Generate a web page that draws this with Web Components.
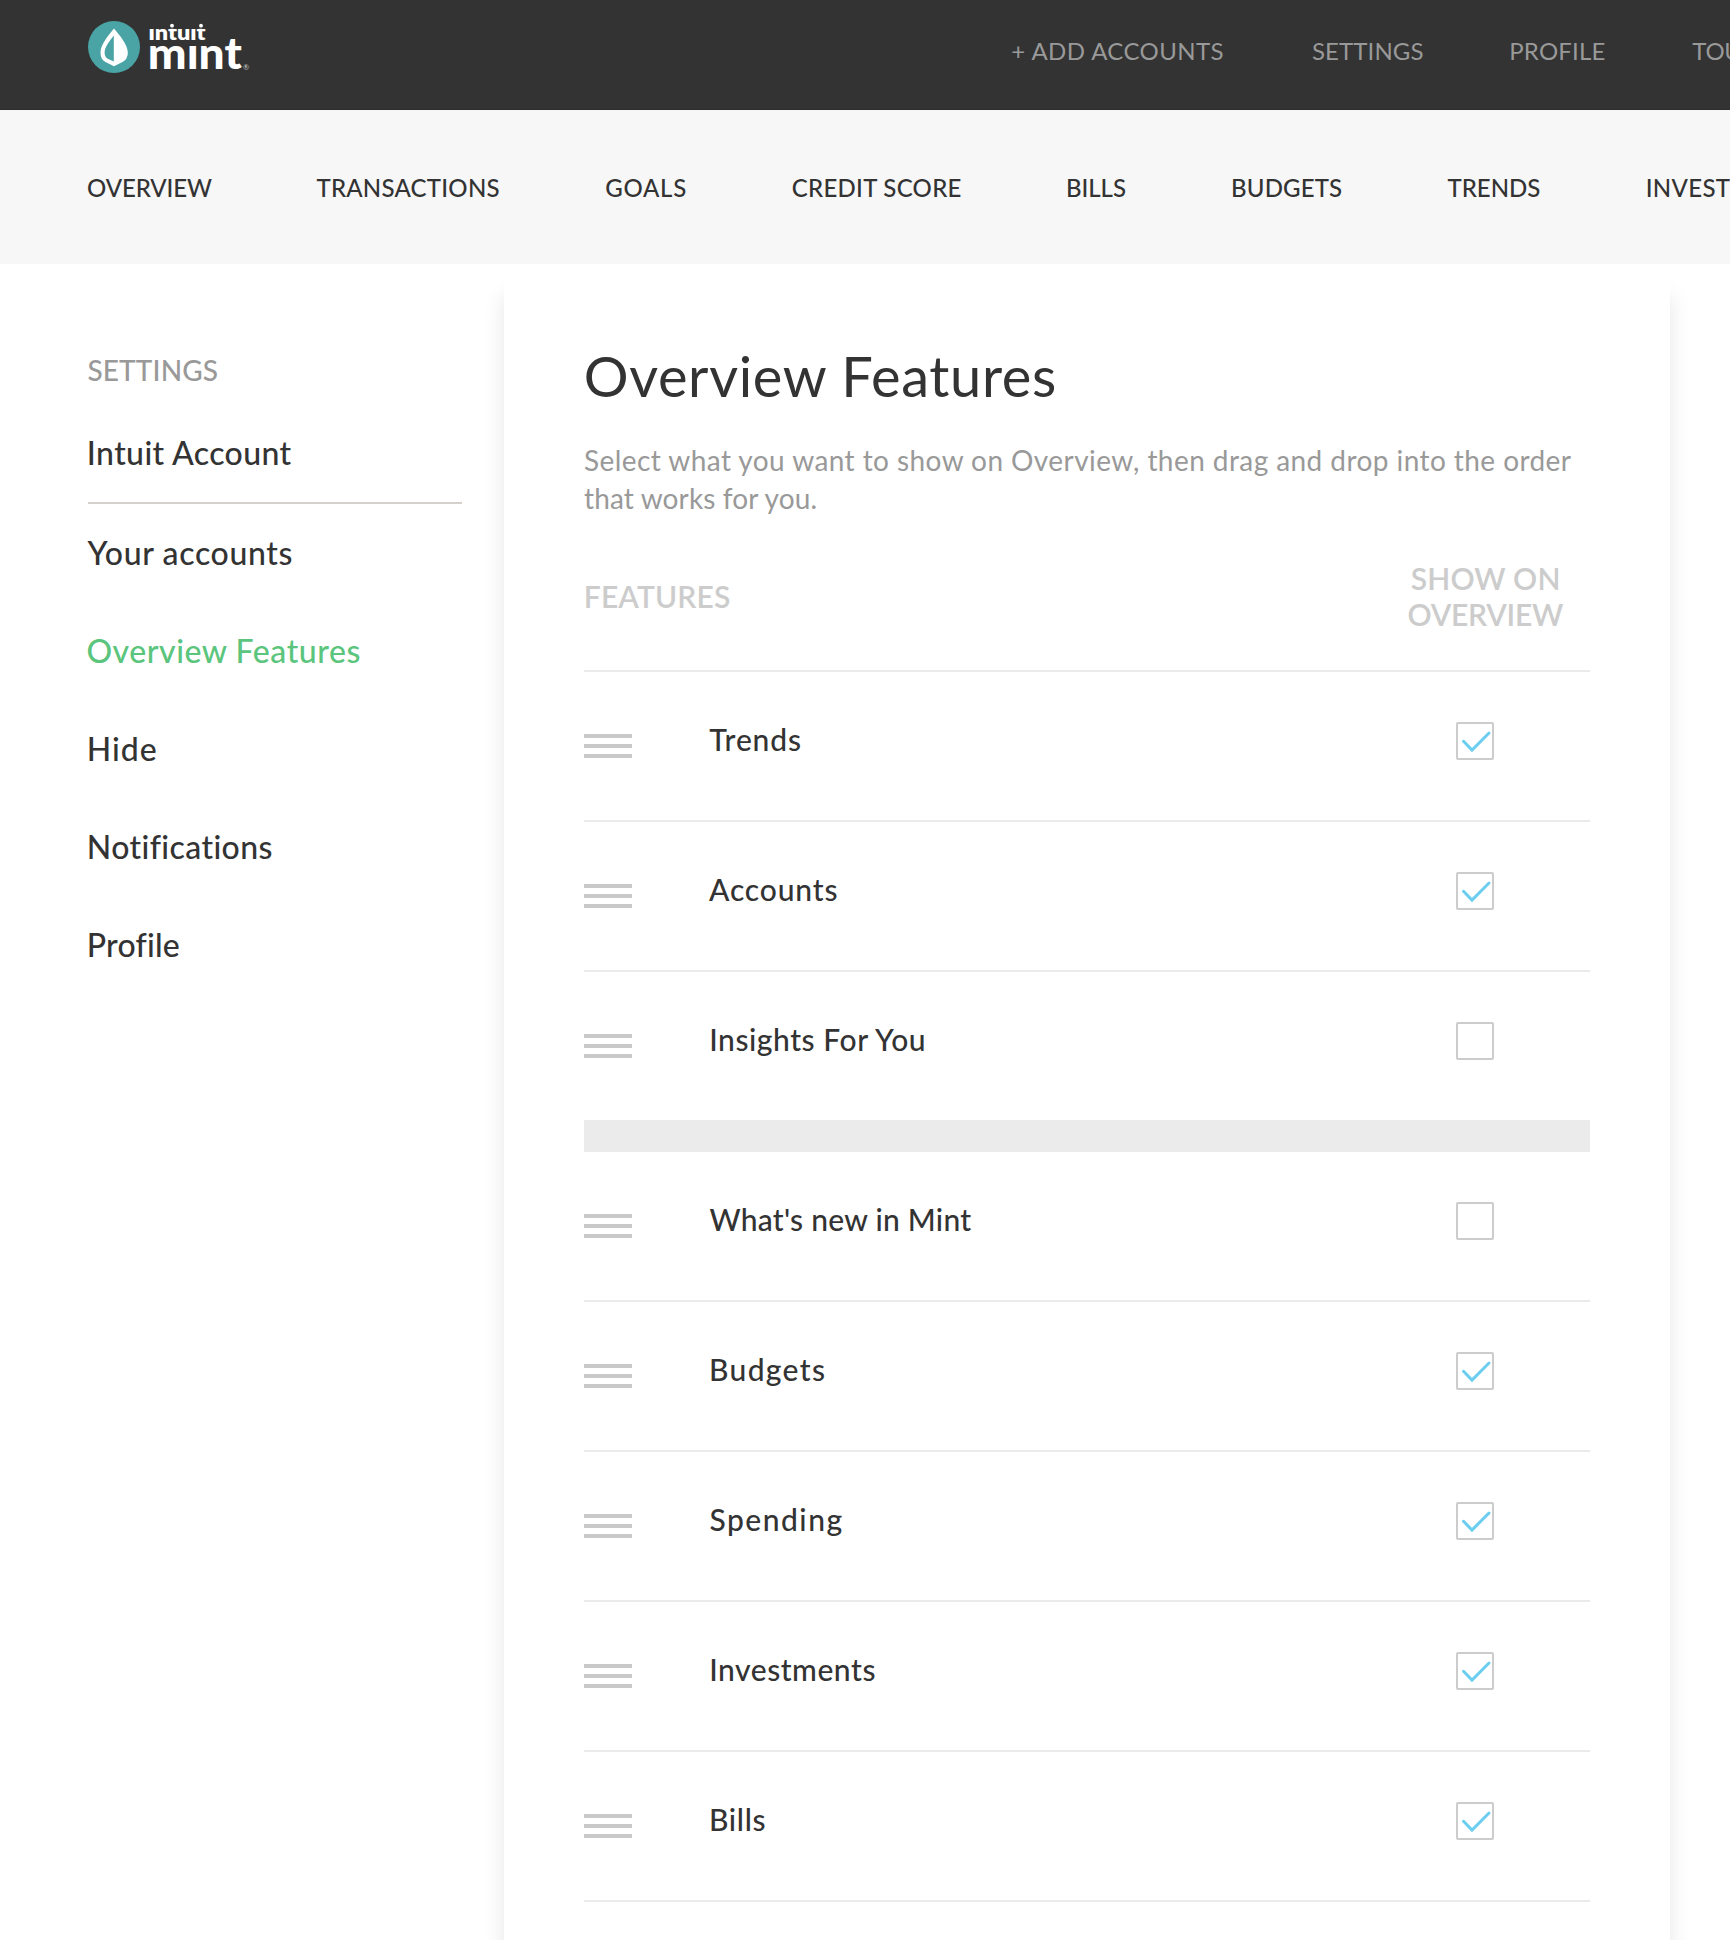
<!DOCTYPE html>
<html lang="en">
<head>
<meta charset="utf-8">
<title>Mint - Overview Features</title>
<style>
  html, body { margin: 0; padding: 0; background: #fff; }
  body { width: 1730px; height: 1940px; overflow: hidden; font-family: Lato, "Open Sans", "Liberation Sans", sans-serif; color: #333; }
</style>
</head>
<body>
<mint-app></mint-app>
<script>
const ctx = document.createElement('canvas').getContext('2d');

/* A line of text tracked so that its ink spans exactly `w` pixels. */
class FitText extends HTMLElement {
  connectedCallback() {
    const text = this.textContent;
    const w = parseFloat(this.getAttribute('w'));
    const size = this.getAttribute('size') || 24;
    const weight = this.getAttribute('weight') || 400;
    const lh = this.getAttribute('lh') || 36;
    ctx.font = `${weight} ${size}px Lato`;
    ctx.letterSpacing = '0.01px';
    const m = ctx.measureText(text);
    const left = -m.actualBoundingBoxLeft;
    const ink = m.actualBoundingBoxRight - left;
    const ls = (w - ink) / (text.length - 1);
    const root = this.attachShadow({ mode: 'open' });
    root.innerHTML = `<style>
      :host { display: block; flex: none; width: ${w}px; height: ${lh}px; line-height: ${lh}px; font-size: ${size}px; font-weight: ${weight}; white-space: nowrap; }
      span { display: block; margin-left: ${-left}px; letter-spacing: ${ls}px; }
    </style><span><slot></slot></span>`;
  }
}

class MintLogo extends HTMLElement {
  connectedCallback() {
    this.attachShadow({ mode: 'open' }).innerHTML = `<style>
      :host { display: block; width: 170px; height: 60px; flex: none; }
      svg { display: block; font-family: Lato, sans-serif; }
    </style>
    <svg width="170" height="60" viewBox="86 20 170 60">
      <circle cx="114" cy="47" r="26" fill="#4aa3a4"/>
      <path d="M114 28.6C118.500 34 127.800 44.500 127.800 52.500C127.800 57 125.800 60.500 122.500 62L114 66.200L105.500 62C102.200 60.500 100.500 57 100.500 52.500C100.500 44.500 109.500 34 114 28.600Z" fill="#fff"/>
      <path d="M113.800 35.500C110 40.500 104.600 47 104.600 52.500C104.600 55.500 105.600 57.700 107.700 58.700L113.800 61.600Z" fill="#4aa3a4"/>
      <text x="147.800" y="68.700" font-size="43" font-weight="900" fill="#fff" textLength="94" lengthAdjust="spacingAndGlyphs">mint</text>
      <rect x="187" y="33" width="13" height="12.500" fill="#333"/>
      <text x="148.500" y="40" font-size="21" font-weight="800" fill="#fff" textLength="57" lengthAdjust="spacingAndGlyphs">intuit</text>
      <rect x="146" y="20" width="64" height="8.800" fill="#333"/>
      <circle cx="172" cy="25.700" r="1.900" fill="#fff"/><circle cx="201" cy="25.700" r="1.900" fill="#fff"/>
      <text x="243" y="69.500" font-size="7.500" fill="#ccc">®</text>
    </svg>`;
  }
}

class TopBar extends HTMLElement {
  connectedCallback() {
    this.attachShadow({ mode: 'open' }).innerHTML = `<style>
      :host { display: flex; box-sizing: border-box; height: 110px; background: #333; border-bottom: 1px solid #2f2b2f; padding: 20px 0 0 86px; overflow: hidden; }
      nav { display: flex; gap: 88.700px; margin: 13px 0 0 756.300px; color: #999; }
    </style>
    <mint-logo></mint-logo>
    <nav>
      <fit-text w="212">+ ADD ACCOUNTS</fit-text>
      <fit-text w="110.500" style="margin-left:-1px">SETTINGS</fit-text>
      <fit-text w="93.500">PROFILE</fit-text>
      <fit-text w="76" style="margin-left:-1px">TOURS</fit-text>
    </nav>`;
  }
}

class MainNav extends HTMLElement {
  connectedCallback() {
    const items = [['OVERVIEW', 124, 0], ['TRANSACTIONS', 183.2, -2.2], ['GOALS', 80, 0], ['CREDIT SCORE', 168.6, 0], ['BILLS', 58, 0], ['BUDGETS', 109, .5], ['TRENDS', 92.8, -1.2], ['INVESTMENTS', 166, .8]];
    this.attachShadow({ mode: 'open' }).innerHTML = `<style>
      :host { display: block; box-sizing: border-box; height: 154px; background: #f7f7f7; padding: 60px 0 0 88px; overflow: hidden; }
      nav { display: flex; gap: 106.600px; }
    </style><nav>${items.map(([t, w, m]) => `<fit-text weight="500" w="${w}" style="margin-left:${m}px">${t}</fit-text>`).join('')}</nav>`;
  }
}

class SideNav extends HTMLElement {
  connectedCallback() {
    this.attachShadow({ mode: 'open' }).innerHTML = `<style>
      :host { display: block; box-sizing: border-box; width: 504px; padding: 88px 0 0 88px; flex: none; }
      .list { display: flex; flex-direction: column; }
      fit-text { margin-left: .800px; }
      .head { color: #999; }
      .head, .o { margin-left: -.6px; }
      .y { margin-left: -1.500px; }
      .first { margin-top: 41px; }
      hr { width: 374px; height: 2px; margin: 25px 0 29px; border: 0; background: #d4d0cc; }
      .gap { margin-top: 58px; }
      .on { color: #5bc57d; }
    </style>
    <div class="list">
      <fit-text class="head" size="28" weight="500" lh="36" w="130.500">SETTINGS</fit-text>
      <fit-text class="first" size="32" weight="500" lh="48" w="204">Intuit Account</fit-text>
      <hr>
      <fit-text class="y" size="32" weight="500" lh="40" w="205.800">Your accounts</fit-text>
      <fit-text class="gap on o" size="32" weight="500" lh="40" w="272.800">Overview Features</fit-text>
      <fit-text class="gap" size="32" weight="500" lh="40" w="67">Hide</fit-text>
      <fit-text class="gap" size="32" weight="500" lh="40" w="182.800">Notifications</fit-text>
      <fit-text class="gap" size="32" weight="500" lh="40" w="90">Profile</fit-text>
    </div>`;
  }
}

class CheckBox extends HTMLElement {
  connectedCallback() {
    const on = this.hasAttribute('checked');
    this.attachShadow({ mode: 'open' }).innerHTML = `<style>
      :host { display: block; box-sizing: border-box; width: 38px; height: 38px; border: 2px solid #ccc; border-radius: 2px; background: #fff; }
      svg { display: block; }
    </style><svg width="34" height="34" viewBox="2 2 34 34">${on ? '<path d="M7.500 19.300L16 28L33 11" fill="none" stroke="#6bcdf0" stroke-width="3" stroke-linecap="round"/>' : ''}</svg>`;
  }
}

class FeatureRow extends HTMLElement {
  connectedCallback() {
    this.attachShadow({ mode: 'open' }).innerHTML = `<style>
      :host { display: flex; box-sizing: border-box; height: 150px; border-bottom: 2px solid #ebebeb; align-items: flex-start; }
      .grip { display: flex; flex-direction: column; gap: 6px; width: 48px; margin-top: 62px; }
      .grip i { height: 4px; background: #c9c9c9; }
      .label { flex: 1; margin: 49px 0 0 77.500px; }
      check-box { margin: 50px 96px 0 0; }
    </style>
    <div class="grip"><i></i><i></i><i></i></div>
    <div class="label"><slot></slot></div>
    <check-box ${this.hasAttribute('checked') ? 'checked' : ''}></check-box>`;
  }
}

class FeaturePanel extends HTMLElement {
  connectedCallback() {
    const rows = [
      ['Trends', 90.8, -.3, 1], ['Accounts', 127.5, -.5, 1], ['Insights For You', 214.6, 1.7, 0], null,
      ["What's new in Mint", 262.5, 0, 0], ['Budgets', 113, 1.5, 1], ['Spending', 133, 0, 1],
      ['Investments', 163.3, 1.7, 1], ['Bills', 53.5, 1.5, 1]];
    this.attachShadow({ mode: 'open' }).innerHTML = `<style>
      :host { display: block; box-sizing: border-box; width: 1166px; height: 1720px; padding: 76px 80px 0; flex: none; background: #fff; box-shadow: 0 32px 20px rgba(0,0,0,.1); }
      .title { margin-left: 1.800px; }
      .sub { color: #999; margin-top: 29px; }
      header { display: flex; align-items: center; justify-content: space-between; color: #ccc; margin-top: 43px; height: 72px; padding: 0 27px 38px 1.800px; border-bottom: 2px solid #ebebeb; }
      .show { display: flex; flex-direction: column; align-items: center; }
      .band { height: 30px; background: #ebebeb; }
    </style>
    <fit-text class="title" size="56" lh="72" w="470.500">Overview Features</fit-text>
    <div class="sub">
      <fit-text size="28" lh="38" w="990">Select what you want to show on Overview, then drag and drop into the order</fit-text>
      <fit-text size="28" lh="38" w="234.500">that works for you.</fit-text>
    </div>
    <header>
      <fit-text size="30" weight="600" lh="36" w="144.200">FEATURES</fit-text>
      <div class="show">
        <fit-text size="30" weight="600" lh="36" w="148" style="margin-right:2px">SHOW ON</fit-text>
        <fit-text size="30" weight="600" lh="36" w="154.500">OVERVIEW</fit-text>
      </div>
    </header>
    ${rows.map(r => r ? `<feature-row ${r[3] ? 'checked' : ''}><fit-text size="30" weight="500" lh="36" w="${r[1]}" style="margin-left:${r[2]}px">${r[0]}</fit-text></feature-row>` : '<div class="band"></div>').join('')}`;
  }
}

class MintApp extends HTMLElement {
  connectedCallback() {
    this.attachShadow({ mode: 'open' }).innerHTML = `<style>
      :host { display: flex; flex-direction: column; width: 1730px; height: 1940px; overflow: hidden; }
      top-bar, main-nav { flex: none; }
      main { display: flex; align-items: flex-start; flex: 1; min-height: 0; overflow: hidden; }
    </style>
    <top-bar></top-bar>
    <main-nav></main-nav>
    <main><side-nav></side-nav><feature-panel></feature-panel></main>`;
  }
}

customElements.define('fit-text', FitText);
customElements.define('mint-logo', MintLogo);
customElements.define('check-box', CheckBox);
customElements.define('feature-row', FeatureRow);
customElements.define('top-bar', TopBar);
customElements.define('main-nav', MainNav);
customElements.define('side-nav', SideNav);
customElements.define('feature-panel', FeaturePanel);
customElements.define('mint-app', MintApp);
</script>
</body>
</html>
